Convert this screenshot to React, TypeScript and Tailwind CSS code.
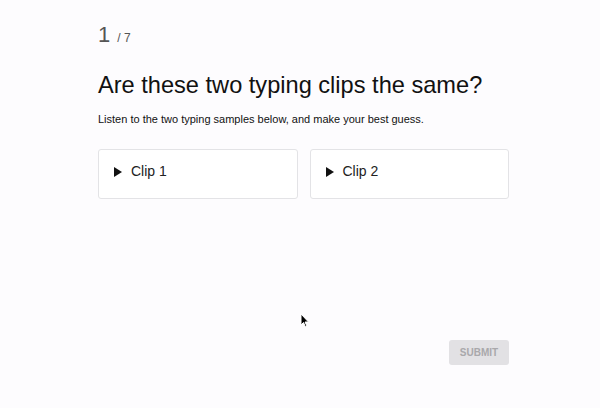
import React from "react";

function Clip({ label }: { label: string }) {
  return (
    <div className="flex h-[50px] flex-1 items-center gap-[9px] rounded-[3px] border border-[#e3e3e6] bg-white pb-[6px] pl-[15px]">
      <svg width="8" height="10" viewBox="0 0 8 10" className="mt-[1px]">
        <path d="M0 0 L8 5 L0 10 Z" fill="#111" />
      </svg>
      <span className="text-[14px] text-[#222]">{label}</span>
    </div>
  );
}

export default function App() {
  return (
    <div
      className="relative h-[408px] w-[600px] bg-[#fdfcfe]"
      style={{ fontFamily: '"Liberation Sans", Arial, sans-serif' }}
    >
      <div className="ml-[98px] flex w-[411px] flex-col pt-[21px]">
        <div className="flex items-baseline text-[#555]">
          <span className="text-[22px] leading-[28px]">1</span>
          <span className="ml-[7px] text-[12px]">/ 7</span>
        </div>
        <h1 className="mt-[21px] text-[23.6px] leading-[30px] text-[#111]">
          Are these two typing clips the same?
        </h1>
        <p className="mt-[11px] text-[11px] leading-[16px] text-[#111]">
          Listen to the two typing samples below, and make your best guess.
        </p>
        <div className="mt-[22px] flex gap-[12px]">
          <Clip label="Clip 1" />
          <Clip label="Clip 2" />
        </div>
        <div className="mt-[141px] flex justify-end">
          <button className="h-[25px] w-[60px] rounded-[3px] bg-[#e2e1e4] text-[10px] font-bold text-[#a9a8ab]">
            SUBMIT
          </button>
        </div>
      </div>
      <svg
        className="absolute left-[300px] top-[313px]"
        width="10"
        height="15"
        viewBox="0 0 10 15"
      >
        <path
          d="M1 1 L1 12 L3.5 9.5 L5.5 14 L7 13.3 L5 9 L8.5 9 Z"
          fill="#000"
          stroke="#fff"
          strokeWidth="1"
        />
      </svg>
    </div>
  );
}
